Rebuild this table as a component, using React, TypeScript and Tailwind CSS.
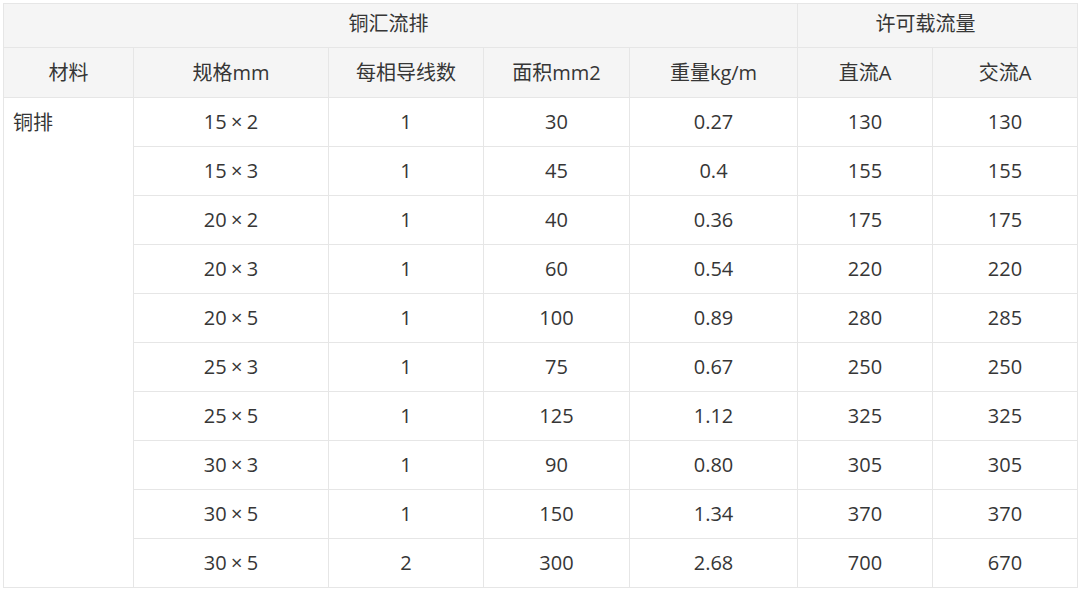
import React from "react";

const rows: [string, string, string, string, string, string, string][] = [
  ["15", "2", "1", "30", "0.27", "130", "130"],
  ["15", "3", "1", "45", "0.4", "155", "155"],
  ["20", "2", "1", "40", "0.36", "175", "175"],
  ["20", "3", "1", "60", "0.54", "220", "220"],
  ["20", "5", "1", "100", "0.89", "280", "285"],
  ["25", "3", "1", "75", "0.67", "250", "250"],
  ["25", "5", "1", "125", "1.12", "325", "325"],
  ["30", "3", "1", "90", "0.80", "305", "305"],
  ["30", "5", "1", "150", "1.34", "370", "370"],
  ["30", "5", "2", "300", "2.68", "700", "670"],
];

const cell = "border border-[#e6e6e6] text-center align-middle p-0";

export default function App() {
  return (
    <div
      className="w-[1080px] h-[589px] bg-white overflow-hidden pt-[3px] pl-[3px] text-[#363636] text-[20px]"
      style={{ fontFamily: '"Open Sans", "Noto Sans CJK SC", sans-serif' }}
    >
      <table className="table-fixed border-collapse w-[1074px]">
        <colgroup>
          <col className="w-[130px]" />
          <col className="w-[195px]" />
          <col className="w-[155px]" />
          <col className="w-[146px]" />
          <col className="w-[168px]" />
          <col className="w-[135px]" />
          <col className="w-[145px]" />
        </colgroup>
        <thead>
          <tr className="h-[44px] bg-[#f5f5f5]">
            <th colSpan={5} className={`${cell} font-normal pr-6 pb-1`}>
              铜汇流排
            </th>
            <th colSpan={2} className={`${cell} font-normal pr-6 pb-1`}>
              许可载流量
            </th>
          </tr>
          <tr className="h-[50px] bg-[#f5f5f5]">
            <th className={`${cell} font-normal`}>材料</th>
            <th className={`${cell} font-normal`}>规格mm</th>
            <th className={`${cell} font-normal`}>每相导线数</th>
            <th className={`${cell} font-normal`}>面积mm2</th>
            <th className={`${cell} font-normal`}>重量kg/m</th>
            <th className={`${cell} font-normal`}>直流A</th>
            <th className={`${cell} font-normal`}>交流A</th>
          </tr>
        </thead>
        <tbody>
          {rows.map((r, i) => (
            <tr key={i} className="h-[49px]">
              {i === 0 && (
                <td
                  rowSpan={rows.length}
                  className="border border-[#e6e6e6] align-top text-left pl-[9px] pt-[10px]"
                >
                  铜排
                </td>
              )}
              <td className={cell}>
                {r[0]}
                <span className="inline-block w-[20px] text-center">×</span>
                {r[1]}
              </td>
              <td className={cell}>{r[2]}</td>
              <td className={cell}>{r[3]}</td>
              <td className={cell}>{r[4]}</td>
              <td className={cell}>{r[5]}</td>
              <td className={cell}>{r[6]}</td>
            </tr>
          ))}
        </tbody>
      </table>
    </div>
  );
}
